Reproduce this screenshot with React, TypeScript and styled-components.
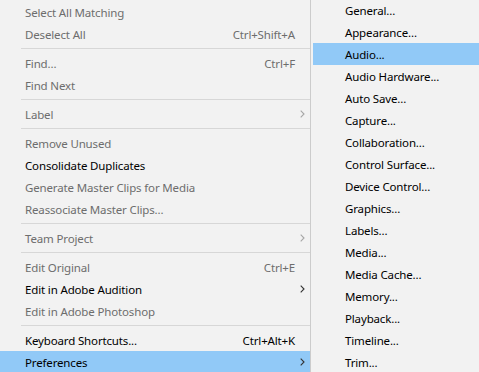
import React from "react";
import styled, { createGlobalStyle } from "styled-components";

const Global = createGlobalStyle`
  html, body { margin: 0; padding: 0; background: #f2f2f2; overflow: hidden; }
  body { font-family: "Segoe UI", "Noto Sans", sans-serif; font-size: 11.5px; letter-spacing: -0.15px; }
`;

const Screen = styled.div`
  display: flex;
  width: 479px;
  height: 372px;
  overflow: hidden;
  background: #f2f2f2;
`;

const MainMenu = styled.div`
  width: 310px;
  flex: none;
  display: flex;
  flex-direction: column;
  padding-top: 1px;
  border-right: 1px solid #cccccc;
`;

const Item = styled.div<{ $disabled?: boolean; $active?: boolean }>`
  height: 22px;
  flex: none;
  display: flex;
  align-items: center;
  padding-left: 25px;
  color: ${(p) => (p.$disabled ? "#6d6d6d" : "#000000")};
  background: ${(p) => (p.$active ? "#91c9f7" : "transparent")};
  white-space: nowrap;
`;

const Label = styled.span`
  flex: 1;
`;

const Shortcut = styled.span`
  margin-right: 0;
`;

const Trail = styled.span`
  width: 15px;
  flex: none;
  display: flex;
  align-items: center;
  padding-left: 5px;
  box-sizing: border-box;
`;

const Separator = styled.div`
  height: 1px;
  margin: 3px 0 3px 21px;
  background: #d7d7d7;
  flex: none;
`;

const SubMenu = styled.div`
  flex: 1;
  display: flex;
  flex-direction: column;
  margin-top: -1px;
  padding-left: 2px;
`;

const SubItem = styled.div<{ $active?: boolean }>`
  height: 22px;
  flex: none;
  display: flex;
  align-items: center;
  padding-left: 32px;
  color: #000;
  background: ${(p) => (p.$active ? "#91c9f7" : "transparent")};
  white-space: nowrap;
`;

const Chevron = ({ color }: { color: string }) => (
  <svg width="5" height="8" viewBox="0 0 5 8">
    <path d="M0.7 0.7 L4 4 L0.7 7.3" fill="none" stroke={color} strokeWidth="1.1" />
  </svg>
);

type Entry =
  | { sep: true }
  | { label: string; disabled?: boolean; shortcut?: string; sub?: boolean; active?: boolean; sep?: false };

const main: Entry[] = [
  { label: "Select All Matching", disabled: true },
  { label: "Deselect All", disabled: true, shortcut: "Ctrl+Shift+A" },
  { sep: true },
  { label: "Find...", disabled: true, shortcut: "Ctrl+F" },
  { label: "Find Next", disabled: true },
  { sep: true },
  { label: "Label", disabled: true, sub: true },
  { sep: true },
  { label: "Remove Unused", disabled: true },
  { label: "Consolidate Duplicates" },
  { label: "Generate Master Clips for Media", disabled: true },
  { label: "Reassociate Master Clips...", disabled: true },
  { sep: true },
  { label: "Team Project", disabled: true, sub: true },
  { sep: true },
  { label: "Edit Original", disabled: true, shortcut: "Ctrl+E" },
  { label: "Edit in Adobe Audition", sub: true },
  { label: "Edit in Adobe Photoshop", disabled: true },
  { sep: true },
  { label: "Keyboard Shortcuts...", shortcut: "Ctrl+Alt+K" },
  { label: "Preferences", sub: true, active: true },
];

const prefs = [
  "General...",
  "Appearance...",
  "Audio...",
  "Audio Hardware...",
  "Auto Save...",
  "Capture...",
  "Collaboration...",
  "Control Surface...",
  "Device Control...",
  "Graphics...",
  "Labels...",
  "Media...",
  "Media Cache...",
  "Memory...",
  "Playback...",
  "Timeline...",
  "Trim...",
];

export default function App() {
  return (
    <>
      <Global />
      <Screen>
        <MainMenu>
          {main.map((e, i) =>
            e.sep ? (
              <Separator key={i} />
            ) : (
              <Item key={i} $disabled={e.disabled} $active={e.active}>
                <Label>{e.label}</Label>
                {e.shortcut && <Shortcut>{e.shortcut}</Shortcut>}
                <Trail>{e.sub && <Chevron color={e.disabled ? "#a6a6a6" : "#333333"} />}</Trail>
              </Item>
            )
          )}
        </MainMenu>
        <SubMenu>
          {prefs.map((p) => (
            <SubItem key={p} $active={p === "Audio..."}>
              {p}
            </SubItem>
          ))}
        </SubMenu>
      </Screen>
    </>
  );
}
